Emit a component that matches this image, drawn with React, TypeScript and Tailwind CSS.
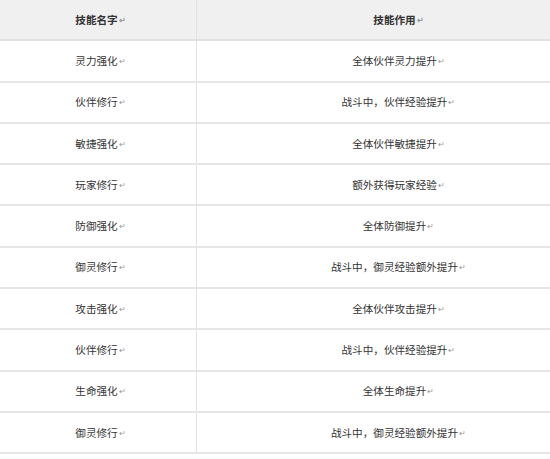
const rows: [string, string][] = [
  ['灵力强化', '全体伙伴灵力提升'],
  ['伙伴修行', '战斗中，伙伴经验提升'],
  ['敏捷强化', '全体伙伴敏捷提升'],
  ['玩家修行', '额外获得玩家经验'],
  ['防御强化', '全体防御提升'],
  ['御灵修行', '战斗中，御灵经验额外提升'],
  ['攻击强化', '全体伙伴攻击提升'],
  ['伙伴修行', '战斗中，伙伴经验提升'],
  ['生命强化', '全体生命提升'],
  ['御灵修行', '战斗中，御灵经验额外提升'],
]

function Mark() {
  return <span className="text-[8px] text-[#999] ml-px">↵</span>
}

export default function App() {
  return (
    <div
      className="w-[550px] h-[459px] overflow-hidden bg-white text-[10.6px] text-[#333]"
      style={{ fontFamily: '"Noto Sans CJK SC", "Liberation Sans", sans-serif' }}
    >
      <div className="w-[600px]">
        <div className="flex h-[41.3px] bg-[#f0f0f0] border-b-2 border-[#e2e2e2] font-bold">
          <div className="w-[197px] pl-[5px] flex items-center justify-center border-r border-[#e2e2e2]">
            技能名字<Mark />
          </div>
          <div className="flex-1 flex items-center justify-center">
            技能作用<Mark />
          </div>
        </div>
        {rows.map(([name, effect], i) => (
          <div key={i} className="flex h-[41.3px] border-b-2 border-[#e6e6e6]">
            <div className="w-[197px] pl-[5px] flex items-center justify-center border-r border-[#e2e2e2]">
              {name}<Mark />
            </div>
            <div className="flex-1 flex items-center justify-center">
              {effect}<Mark />
            </div>
          </div>
        ))}
      </div>
    </div>
  )
}
